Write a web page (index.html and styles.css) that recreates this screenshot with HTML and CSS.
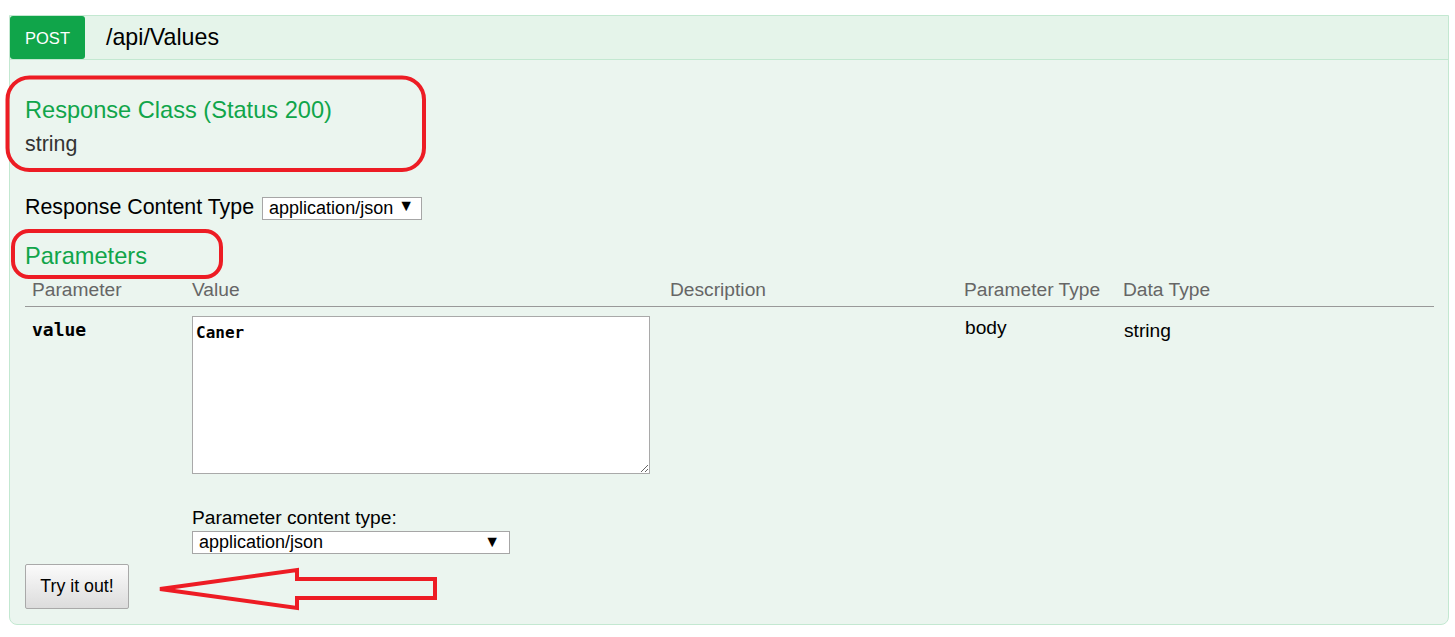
FILE: index.html
```html
<!DOCTYPE html>
<html lang="en">
<head>
    <meta charset="UTF-8">
    <title>POST /api/Values</title>
    <link rel="stylesheet" href="styles.css">
</head>
<body>

<div class="endpoint">
    <div class="heading">
        <span class="http-method">POST</span>
        <span class="path">/api/Values</span>
    </div>

    <div class="content">
        <h4 class="response-class">Response Class (Status 200)</h4>
        <div class="model">string</div>

        <div class="content-type">
            <label for="responseType">Response Content Type</label>
            <span class="select-wrap select-small">
                <select id="responseType">
                    <option>application/json</option>
                </select>
            </span>
        </div>

        <h4 class="params-title">Parameters</h4>
        <table class="params">
            <colgroup>
                <col class="col-name">
                <col class="col-value">
                <col class="col-desc">
                <col class="col-ptype">
                <col class="col-dtype">
            </colgroup>
            <thead>
                <tr>
                    <th>Parameter</th>
                    <th>Value</th>
                    <th>Description</th>
                    <th>Parameter Type</th>
                    <th>Data Type</th>
                </tr>
            </thead>
            <tbody>
                <tr>
                    <td class="code">value</td>
                    <td>
                        <textarea class="body-textarea">Caner</textarea>
                        <div class="param-type">
                            <label for="paramType">Parameter content type:</label>
                            <span class="select-wrap select-wide">
                                <select id="paramType">
                                    <option>application/json</option>
                                </select>
                            </span>
                        </div>
                    </td>
                    <td></td>
                    <td class="ptype">body</td>
                    <td class="dtype">string</td>
                </tr>
            </tbody>
        </table>

        <button class="submit" type="button">Try it out!</button>
    </div>
</div>

<!-- red marks drawn over the screenshot -->
<svg class="marks" width="1455" height="637" viewBox="0 0 1455 637">
    <rect x="7.5" y="77.5" width="416.5" height="92.5" rx="22" ry="22" />
    <rect x="13" y="231" width="208" height="46" rx="16" ry="16" />
    <polygon points="160,589 297,570 297,579 435,579 435,598 297,598 297,608" />
</svg>

</body>
</html>
```

FILE: styles.css
```css
body {
    margin: 0;
    font-family: "Liberation Sans", Arial, sans-serif;
    color: #000;
    background-color: #fff;
    position: relative;
}

.endpoint {
    margin: 15px 6px 0 9px;
    border: 1px solid #c3e8d1;
    border-radius: 0 0 8px 8px;
    background-color: #ebf5ef;
}

.heading {
    display: flex;
    align-items: center;
    height: 43px;
    background-color: #e5f4ea;
    border-bottom: 1px solid #c3e8d1;
}

.http-method {
    display: flex;
    align-items: center;
    justify-content: center;
    width: 75px;
    height: 43px;
    padding-top: 2px;
    box-sizing: border-box;
    background-color: #10a54a;
    color: #fff;
    font-size: 16.5px;
    border-radius: 3px;
}

.path {
    margin-left: 21px;
    font-size: 23.2px;
    color: #000;
}

.content {
    padding: 36px 14px 15px 15px;
}

h4 {
    margin: 0;
    font-weight: normal;
    font-size: 23.6px;
    line-height: 28px;
    color: #10a54a;
}

.model {
    margin-top: 7px;
    font-size: 21.4px;
    line-height: 26px;
    color: #333;
}

.content-type {
    margin-top: 37px;
    font-size: 21.4px;
    line-height: 26px;
}

.content-type label {
    margin-right: 2px;
}

.select-wrap {
    position: relative;
    display: inline-block;
    vertical-align: baseline;
}

.select-wrap select {
    -webkit-appearance: none;
    appearance: none;
    box-sizing: border-box;
    height: 23px;
    padding: 0 0 0 6px;
    border: 1px solid #a6a6a6;
    border-radius: 0;
    background-color: #fff;
    font-family: "Liberation Sans", Arial, sans-serif;
    font-size: 18px;
    color: #000;
}

.select-wrap::after {
    content: "\25BC";
    position: absolute;
    top: 3px;
    right: 8px;
    font-size: 16px;
    line-height: 17px;
    pointer-events: none;
}

.select-small select {
    width: 160px;
}

.select-wide select {
    width: 318px;
}

.params-title {
    margin-top: 22px;
}

.params {
    width: 100%;
    table-layout: fixed;
    border-collapse: collapse;
    margin-top: 8px;
}

.col-name { width: 160px; }
.col-value { width: 478px; }
.col-desc { width: 294px; }
.col-ptype { width: 159px; }

.params th {
    text-align: left;
    font-weight: normal;
    font-size: 19.2px;
    line-height: 24px;
    color: #666;
    padding: 0 7px 4px;
    border-bottom: 1px solid #999;
}

.params td {
    vertical-align: top;
    padding: 9px 7px 0;
    font-size: 19.2px;
    line-height: 24px;
}

.params td.code {
    padding-top: 13px;
    font-family: "DejaVu Sans Mono", monospace;
    font-weight: bold;
    font-size: 18px;
    line-height: 20px;
}

.params td.ptype {
    padding-top: 9px;
    padding-left: 8px;
}

.params td.dtype {
    padding-top: 12px;
    padding-left: 8px;
}

.body-textarea {
    display: block;
    box-sizing: border-box;
    width: 458px;
    height: 158px;
    margin: 0;
    padding: 6px 3px;
    border: 1px solid #a9a9a9;
    font-family: "DejaVu Sans Mono", monospace;
    font-weight: bold;
    font-size: 16px;
    color: #000;
    background-color: #fff;
    resize: both;
}

.param-type {
    margin-top: 32px;
}

.param-type label {
    display: block;
}

.param-type .select-wrap {
    display: block;
    width: 318px;
}

.param-type .select-wrap::after {
    right: 10px;
}

.submit {
    display: block;
    box-sizing: border-box;
    width: 104px;
    height: 45px;
    margin-top: 10px;
    padding: 0;
    border: 1px solid #a9a9a9;
    border-radius: 2px;
    background: linear-gradient(#fbfbfb, #dcdcdc);
    font-family: "Liberation Sans", Arial, sans-serif;
    font-size: 17.8px;
    color: #000;
}

.marks {
    position: absolute;
    top: 0;
    left: 0;
    pointer-events: none;
}

.marks rect,
.marks polygon {
    fill: none;
    stroke: #ed1c24;
    stroke-width: 4;
}
```
